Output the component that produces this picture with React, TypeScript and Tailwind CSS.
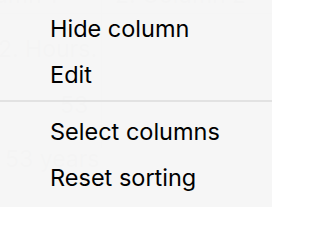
import React from 'react';

const items = [['Hide column', 'Edit'], ['Select columns', 'Reset sorting']];

export default function App() {
  return (
    <div className="relative w-[272px] h-[207px] overflow-hidden bg-[#f6f6f6] font-['Inter','Noto_Sans',sans-serif]">
      {/* table behind the menu */}
      <div className="flex flex-col text-[23px] leading-none text-[#ebebeb]">
        <div className="flex h-[14px] items-end border-b border-[#f0f0f0]">
          <div className="w-[102px] border-r border-[#eeeeee] h-full flex items-end pb-[6px]">
            <span className="ml-[-42px]">Column 1</span>
          </div>
          <span className="ml-[13px] pb-[6px]">2. Column 2</span>
        </div>
        <div className="flex h-[78px]">
          <div className="w-[102px] border-r border-[#eeeeee] pt-[24px]">
            <span className="ml-[-2px]">2. Hours.</span>
          </div>
        </div>
        <div className="flex h-[56px]">
          <div className="w-[102px] border-r border-[#eeeeee] pt-[2px]">
            <span className="ml-[60px]">53</span>
          </div>
        </div>
        <div className="flex h-[59px]">
          <div className="w-[102px]">
            <span className="ml-[5px]">53 years</span>
          </div>
        </div>
      </div>

      {/* context menu */}
      <div className="absolute inset-0 flex flex-col bg-[#f6f6f6]/80 pt-[6px] text-[23.5px] text-black">
        {items.map((group, gi) => (
          <div key={gi} className="flex flex-col">
            {gi > 0 && <div className="h-[2px] bg-[#e2e2e2] mt-[2px] mb-[7px]" />}
            {group.map((label) => (
              <div key={label} className="h-[46px] pl-[50px] flex items-center leading-none">
                {label}
              </div>
            ))}
          </div>
        ))}
      </div>
    </div>
  );
}
